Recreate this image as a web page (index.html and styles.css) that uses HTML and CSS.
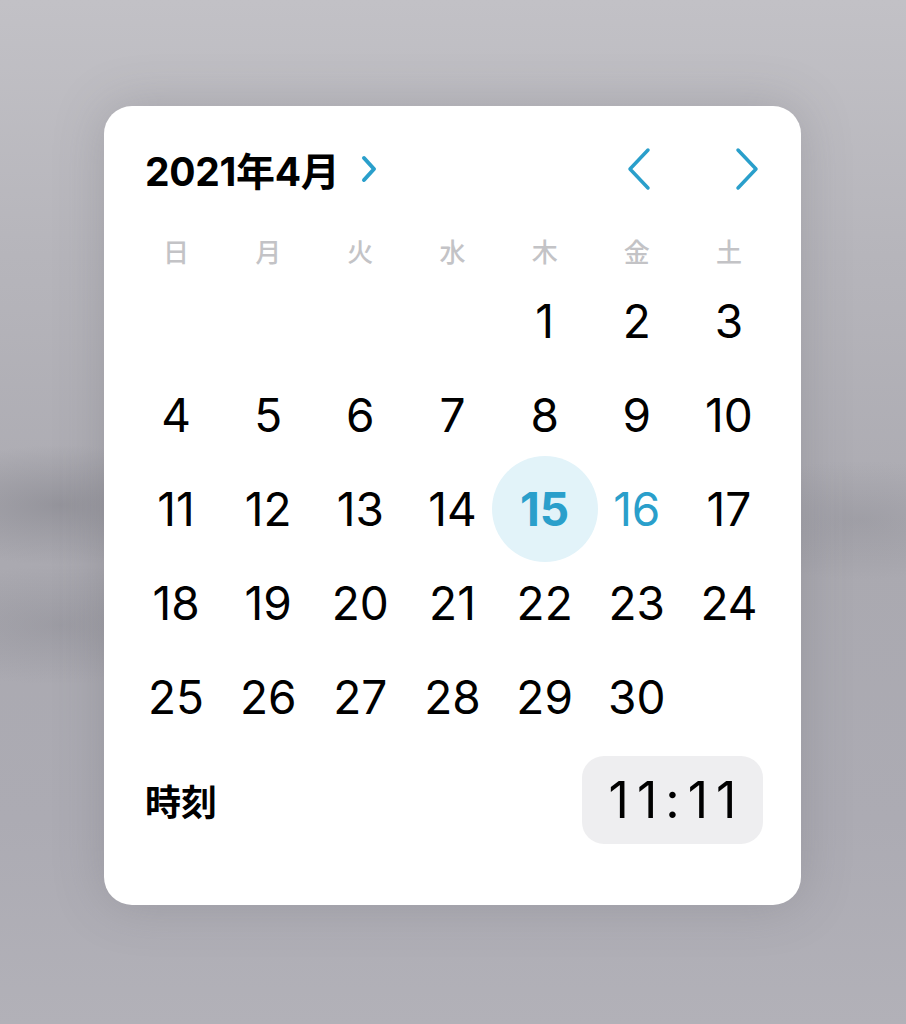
FILE: index.html
```html
<!DOCTYPE html>
<html lang="ja">

<head>
  <meta charset="UTF-8">
  <meta name="viewport" content="width=device-width, initial-scale=1.0">
  <title>日付と時刻</title>
  <link rel="stylesheet" href="styles.css">
</head>

<body>

  <div class="picker">
    <div class="header">
      <div class="month">2021年4月
        <svg class="month-arrow" width="18" height="30" viewBox="0 0 18 30">
          <path d="M4 4 L14 15 L4 26" />
        </svg>
      </div>
      <div class="nav">
        <svg class="nav-arrow" width="26" height="46" viewBox="0 0 26 46">
          <path d="M22 4 L4 23 L22 42" />
        </svg>
        <svg class="nav-arrow" width="26" height="46" viewBox="0 0 26 46">
          <path d="M4 4 L22 23 L4 42" />
        </svg>
      </div>
    </div>

    <div class="weekdays">
      <span>日</span><span>月</span><span>火</span><span>水</span><span>木</span><span>金</span><span>土</span>
    </div>

    <div class="days">
      <span></span><span></span><span></span><span></span>
      <span>1</span><span>2</span><span>3</span>
      <span>4</span><span>5</span><span>6</span><span>7</span><span>8</span><span>9</span><span>10</span>
      <span>11</span><span>12</span><span>13</span><span>14</span>
      <span class="selected">15</span>
      <span class="today">16</span>
      <span>17</span>
      <span>18</span><span>19</span><span>20</span><span>21</span><span>22</span><span>23</span><span>24</span>
      <span>25</span><span>26</span><span>27</span><span>28</span><span>29</span><span>30</span>
    </div>

    <div class="time-row">
      <div class="time-label">時刻</div>
      <div class="time-value">11:11</div>
    </div>
  </div>

</body>

</html>
```

FILE: styles.css
```css
body {
  margin: 0;
  height: 1024px;
  overflow: hidden;
  font-family: 'Inter', 'Noto Sans CJK JP', sans-serif;
  background:
    radial-gradient(ellipse 160px 60px at 60px 505px, rgba(120, 120, 128, 0.45), transparent),
    radial-gradient(ellipse 160px 60px at 60px 625px, rgba(130, 130, 138, 0.35), transparent),
    radial-gradient(ellipse 140px 60px at 860px 520px, rgba(130, 130, 138, 0.3), transparent),
    linear-gradient(#c2c1c6 0%, #b6b5bb 25%, #aaa9b0 55%, #acabb3 80%, #b2b1b8 100%);
}

.picker {
  box-sizing: border-box;
  width: 697px;
  height: 799px;
  margin: 106px 0 0 104px;
  padding: 39px 26px 0;
  background-color: #ffffff;
  border-radius: 28px;
  box-shadow: 0 0 50px rgba(90, 90, 100, 0.25);
}

.header {
  display: flex;
  align-items: center;
  justify-content: space-between;
  height: 48px;
  padding: 0 15px;
}

.month {
  display: flex;
  align-items: center;
  font-size: 39px;
  font-weight: 700;
  color: #000;
  letter-spacing: -0.3px;
}

.month-arrow {
  margin-left: 20px;
}

.month-arrow path,
.nav-arrow path {
  fill: none;
  stroke: #2a9fcb;
  stroke-linecap: round;
  stroke-linejoin: round;
}

.month-arrow path {
  stroke-width: 4;
}

.nav-arrow path {
  stroke-width: 3.5;
}

.nav {
  display: flex;
  gap: 82px;
}

.weekdays {
  display: grid;
  grid-template-columns: repeat(7, minmax(0, 1fr));
  height: 44px;
  margin-top: 35px;
  align-items: center;
  text-align: center;
  font-size: 26px;
  font-weight: 500;
  color: #c3c3c6;
}

.days {
  display: grid;
  grid-template-columns: repeat(7, minmax(0, 1fr));
  grid-auto-rows: 94px;
  margin-top: 2px;
  align-items: center;
  justify-items: center;
  font-size: 46px;
  color: #000;
}

.days span {
  display: flex;
  align-items: center;
  justify-content: center;
  width: 100%;
  height: 100%;
}

.days .selected {
  width: 106px;
  height: 106px;
  margin: -6px -7px;
  border-radius: 50%;
  background-color: #e2f3f9;
  color: #2a9fcb;
  font-weight: 700;
}

.days .today {
  color: #2a9fcb;
}

.time-row {
  display: flex;
  align-items: center;
  justify-content: space-between;
  margin-top: 12px;
  padding: 0 12px 0 15px;
}

.time-label {
  font-size: 36px;
  font-weight: 700;
  color: #000;
}

.time-value {
  width: 181px;
  height: 88px;
  line-height: 88px;
  text-align: center;
  border-radius: 22px;
  background-color: #eeeef0;
  font-size: 50px;
  color: #000;
  letter-spacing: 8px;
  text-indent: 8px;
}
```
